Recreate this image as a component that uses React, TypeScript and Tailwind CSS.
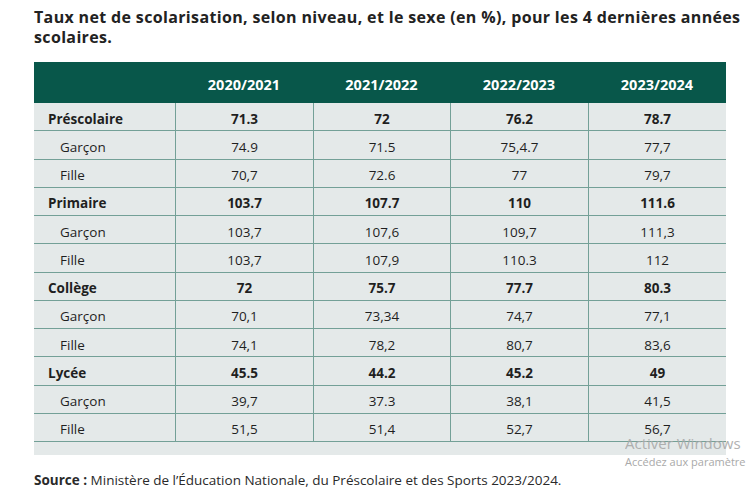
import React from "react";

type Row = { label: string; bold?: boolean; values: string[] };

const rows: Row[] = [
  { label: "Préscolaire", bold: true, values: ["71.3", "72", "76.2", "78.7"] },
  { label: "Garçon", values: ["74.9", "71.5", "75,4.7", "77,7"] },
  { label: "Fille", values: ["70,7", "72.6", "77", "79,7"] },
  { label: "Primaire", bold: true, values: ["103.7", "107.7", "110", "111.6"] },
  { label: "Garçon", values: ["103,7", "107,6", "109,7", "111,3"] },
  { label: "Fille", values: ["103,7", "107,9", "110.3", "112"] },
  { label: "Collège", bold: true, values: ["72", "75.7", "77.7", "80.3"] },
  { label: "Garçon", values: ["70,1", "73,34", "74,7", "77,1"] },
  { label: "Fille", values: ["74,1", "78,2", "80,7", "83,6"] },
  { label: "Lycée", bold: true, values: ["45.5", "44.2", "45.2", "49"] },
  { label: "Garçon", values: ["39,7", "37.3", "38,1", "41,5"] },
  { label: "Fille", values: ["51,5", "51,4", "52,7", "56,7"] },
];

const years = ["2020/2021", "2021/2022", "2022/2023", "2023/2024"];

export default function App() {
  return (
    <div
      className="relative w-[748px] h-[492px] bg-white overflow-hidden text-[#1f1f1f]"
      style={{ fontFamily: '"Open Sans", "Noto Sans", sans-serif' }}
    >
      <div className="pl-[34px] pt-[7px] text-[16px] tracking-[0.35px] leading-[20px] font-bold text-[#222] whitespace-nowrap">
        Taux net de scolarisation, selon niveau, et le sexe (en %), pour les 4 dernières années
        <br />
        scolaires.
      </div>

      <div className="ml-[34px] mt-[15px] w-[692px] bg-[#e4e9e9]">
        <div className="grid grid-cols-[141px_138px_137px_138px_138px] h-[41px] bg-[#08574a] text-white font-bold text-[14.5px]">
          <div />
          {years.map((y) => (
            <div key={y} className="flex items-center justify-center pt-[4px]">
              {y}
            </div>
          ))}
        </div>
        {rows.map((r, i) => (
          <div
            key={i}
            className={`grid grid-cols-[141px_138px_137px_138px_138px] h-[28.25px] border-b border-[#73a097] text-[13.5px] ${
              r.bold ? "font-bold" : "font-normal"
            }`}
          >
            <div className={`flex items-center pt-[4px] ${r.bold ? "pl-[14px]" : "pl-[26px]"}`}>
              {r.label}
            </div>
            {r.values.map((v, j) => (
              <div
                key={j}
                className="flex items-center justify-center pt-[4px] border-l border-[#73a097]"
              >
                {v}
              </div>
            ))}
          </div>
        ))}
        <div className="h-[13px]" />
      </div>

      <div className="pl-[34px] mt-[15px] text-[13.5px] text-[#2a2a2a]">
        <span className="font-bold">Source :</span> Ministère de l’Éducation Nationale, du
        Préscolaire et des Sports 2023/2024.
      </div>

      <div className="absolute left-[625px] top-[434px] text-[15px] leading-[18px] text-[#a9a9a9] whitespace-nowrap opacity-90">
        Activer Windows
      </div>
      <div className="absolute left-[625px] top-[455px] text-[11px] leading-[14px] text-[#a9a9a9] whitespace-nowrap">
        Accédez aux paramètre
      </div>
    </div>
  );
}
